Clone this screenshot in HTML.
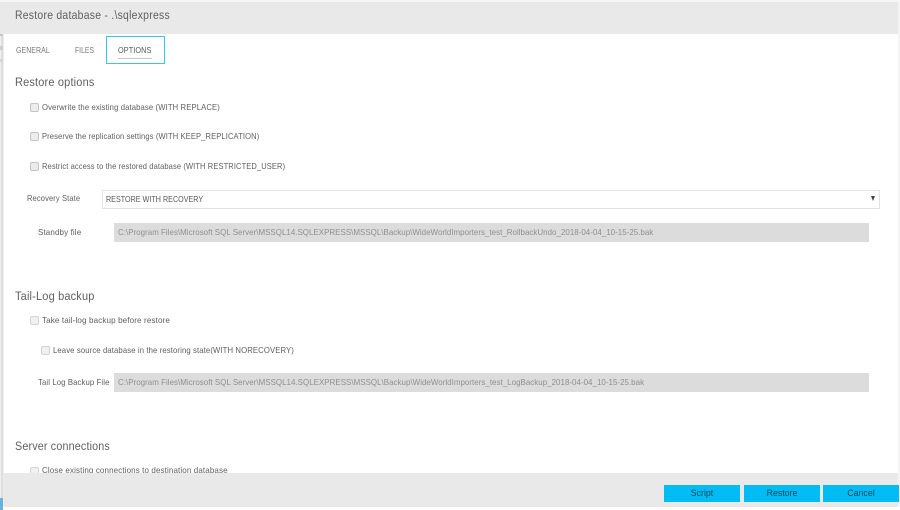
<!DOCTYPE html>
<html>
<head>
<meta charset="utf-8">
<style>
html,body{margin:0;padding:0;background:#fff;}
#p{position:relative;width:900px;height:510px;overflow:hidden;background:#fff;font-family:"Liberation Sans",sans-serif;color:#555;}
#p div{position:absolute;white-space:nowrap;}
.t{font-size:8.4px;line-height:12px;letter-spacing:.13px;color:#5e5e5e;filter:blur(.3px);transform-origin:0 0;}
.h{font-size:12.2px;line-height:16px;letter-spacing:.2px;color:#5f5f5f;filter:blur(.25px);transform-origin:0 0;}
.c{width:7px;height:7px;background:#ececec;border:1px solid #c4c4c4;border-radius:2px;}
.f{left:114px;width:755px;height:19px;background:#dcdcdc;}
.ft{color:#8f8f8f;font-size:8.1px;line-height:19px;letter-spacing:.02px;filter:blur(.25px);transform-origin:0 0;left:118px;}
.b{top:485px;width:76px;height:17px;background:#00bcf2;color:#14485f;font-size:8.8px;line-height:17px;text-align:center;}
</style>
</head>
<body>
<div id="p">
<div style="left:0;top:0;width:900px;height:2px;background:#f6f6f6"></div>
<div style="left:0;top:34px;width:1px;height:476px;background:#f0f0f0"></div>
<div style="left:1px;top:34px;width:2px;height:464px;background:#dedede"></div>
<div style="left:0;top:33px;width:3px;height:3px;background:#c8c8c8"></div>
<div style="left:0;top:46px;width:3px;height:4px;background:#d0d0d0"></div>
<div style="left:0;top:59px;width:3px;height:3px;background:#d6d6d6"></div>
<div style="left:3px;top:34px;width:1px;height:473px;background:#ececec"></div>
<div style="left:0;top:498px;width:3px;height:12px;background:#6fb1dc"></div>
<div style="left:0;top:2px;width:898px;height:32px;background:#e9e9e9"></div>
<div style="left:898px;top:2px;width:2px;height:505px;background:#f4f4f4"></div>
<div class="h" style="left:15px;top:7px;font-size:12.4px;letter-spacing:.32px;transform:scaleX(.838)">Restore database - .\sqlexpress</div>

<div class="t" style="left:16px;top:44px;color:#777;letter-spacing:.1px;transform:scaleX(.83)">GENERAL</div>
<div class="t" style="left:75px;top:44px;color:#777;letter-spacing:.1px;transform:scaleX(.8)">FILES</div>
<div style="left:106px;top:36px;width:57px;height:26px;border:1px solid #38c6f0"></div>
<div class="t" style="left:118px;top:44px;color:#555;letter-spacing:.1px;transform:scaleX(.87)">OPTIONS</div>
<div style="left:118px;top:58px;width:34px;height:1px;background:#c8c8c8"></div>

<div class="h" style="left:15px;top:74px;transform:scaleX(.9)">Restore options</div>
<div class="c" style="left:30px;top:103px"></div>
<div class="t" style="left:42px;top:101px;transform:scaleX(.917)">Overwrite the existing database (WITH REPLACE)</div>
<div class="c" style="left:30px;top:132px"></div>
<div class="t" style="left:42px;top:130px;transform:scaleX(.904)">Preserve the replication settings (WITH KEEP_REPLICATION)</div>
<div class="c" style="left:30px;top:162px"></div>
<div class="t" style="left:42px;top:160px;transform:scaleX(.897)">Restrict access to the restored database (WITH RESTRICTED_USER)</div>

<div class="t" style="left:27px;top:192px;transform:scaleX(.9)">Recovery State</div>
<div style="left:102px;top:190px;width:776px;height:17px;border:1px solid #e2e2e2;background:#fff"></div>
<div class="t" style="left:106px;top:193px;color:#555;letter-spacing:.05px;transform:scaleX(.85)">RESTORE WITH RECOVERY</div>
<div style="left:871px;top:196px;width:0;height:0;border-left:2.5px solid transparent;border-right:2.5px solid transparent;border-top:5px solid #444"></div>

<div class="t" style="left:38px;top:226px;transform:scaleX(.955)">Standby file</div>
<div class="f" style="top:223px"></div>
<div class="ft" style="top:223px;transform:scaleX(.982)">C:\Program Files\Microsoft SQL Server\MSSQL14.SQLEXPRESS\MSSQL\Backup\WideWorldImporters_test_RollbackUndo_2018-04-04_10-15-25.bak</div>

<div class="h" style="left:15px;top:288px;transform:scaleX(.9)">Tail-Log backup</div>
<div class="c" style="left:30px;top:316px;background:#f0f0f0;border-color:#d4d4d4"></div>
<div class="t" style="left:42px;top:314px;transform:scaleX(.962)">Take tail-log backup before restore</div>
<div class="c" style="left:41px;top:346px;background:#f0f0f0;border-color:#d4d4d4"></div>
<div class="t" style="left:53px;top:344px;transform:scaleX(.92)">Leave source database in the restoring state(WITH NORECOVERY)</div>

<div class="t" style="left:38px;top:376px;transform:scaleX(.922)">Tail Log Backup File</div>
<div class="f" style="top:373px"></div>
<div class="ft" style="top:373px;transform:scaleX(.983)">C:\Program Files\Microsoft SQL Server\MSSQL14.SQLEXPRESS\MSSQL\Backup\WideWorldImporters_test_LogBackup_2018-04-04_10-15-25.bak</div>

<div class="h" style="left:15px;top:438px;transform:scaleX(.88)">Server connections</div>
<div class="c" style="left:30px;top:467px;background:#f0f0f0;border-color:#d4d4d4"></div>
<div class="t" style="left:42px;top:464px;transform:scaleX(.954)">Close existing connections to destination database</div>

<div style="left:4px;top:473px;width:894px;height:34px;background:#e9e9e9"></div>
<div class="b" style="left:664px">Script</div>
<div class="b" style="left:744px">Restore</div>
<div class="b" style="left:823px">Cancel</div>
</div>
</body>
</html>
